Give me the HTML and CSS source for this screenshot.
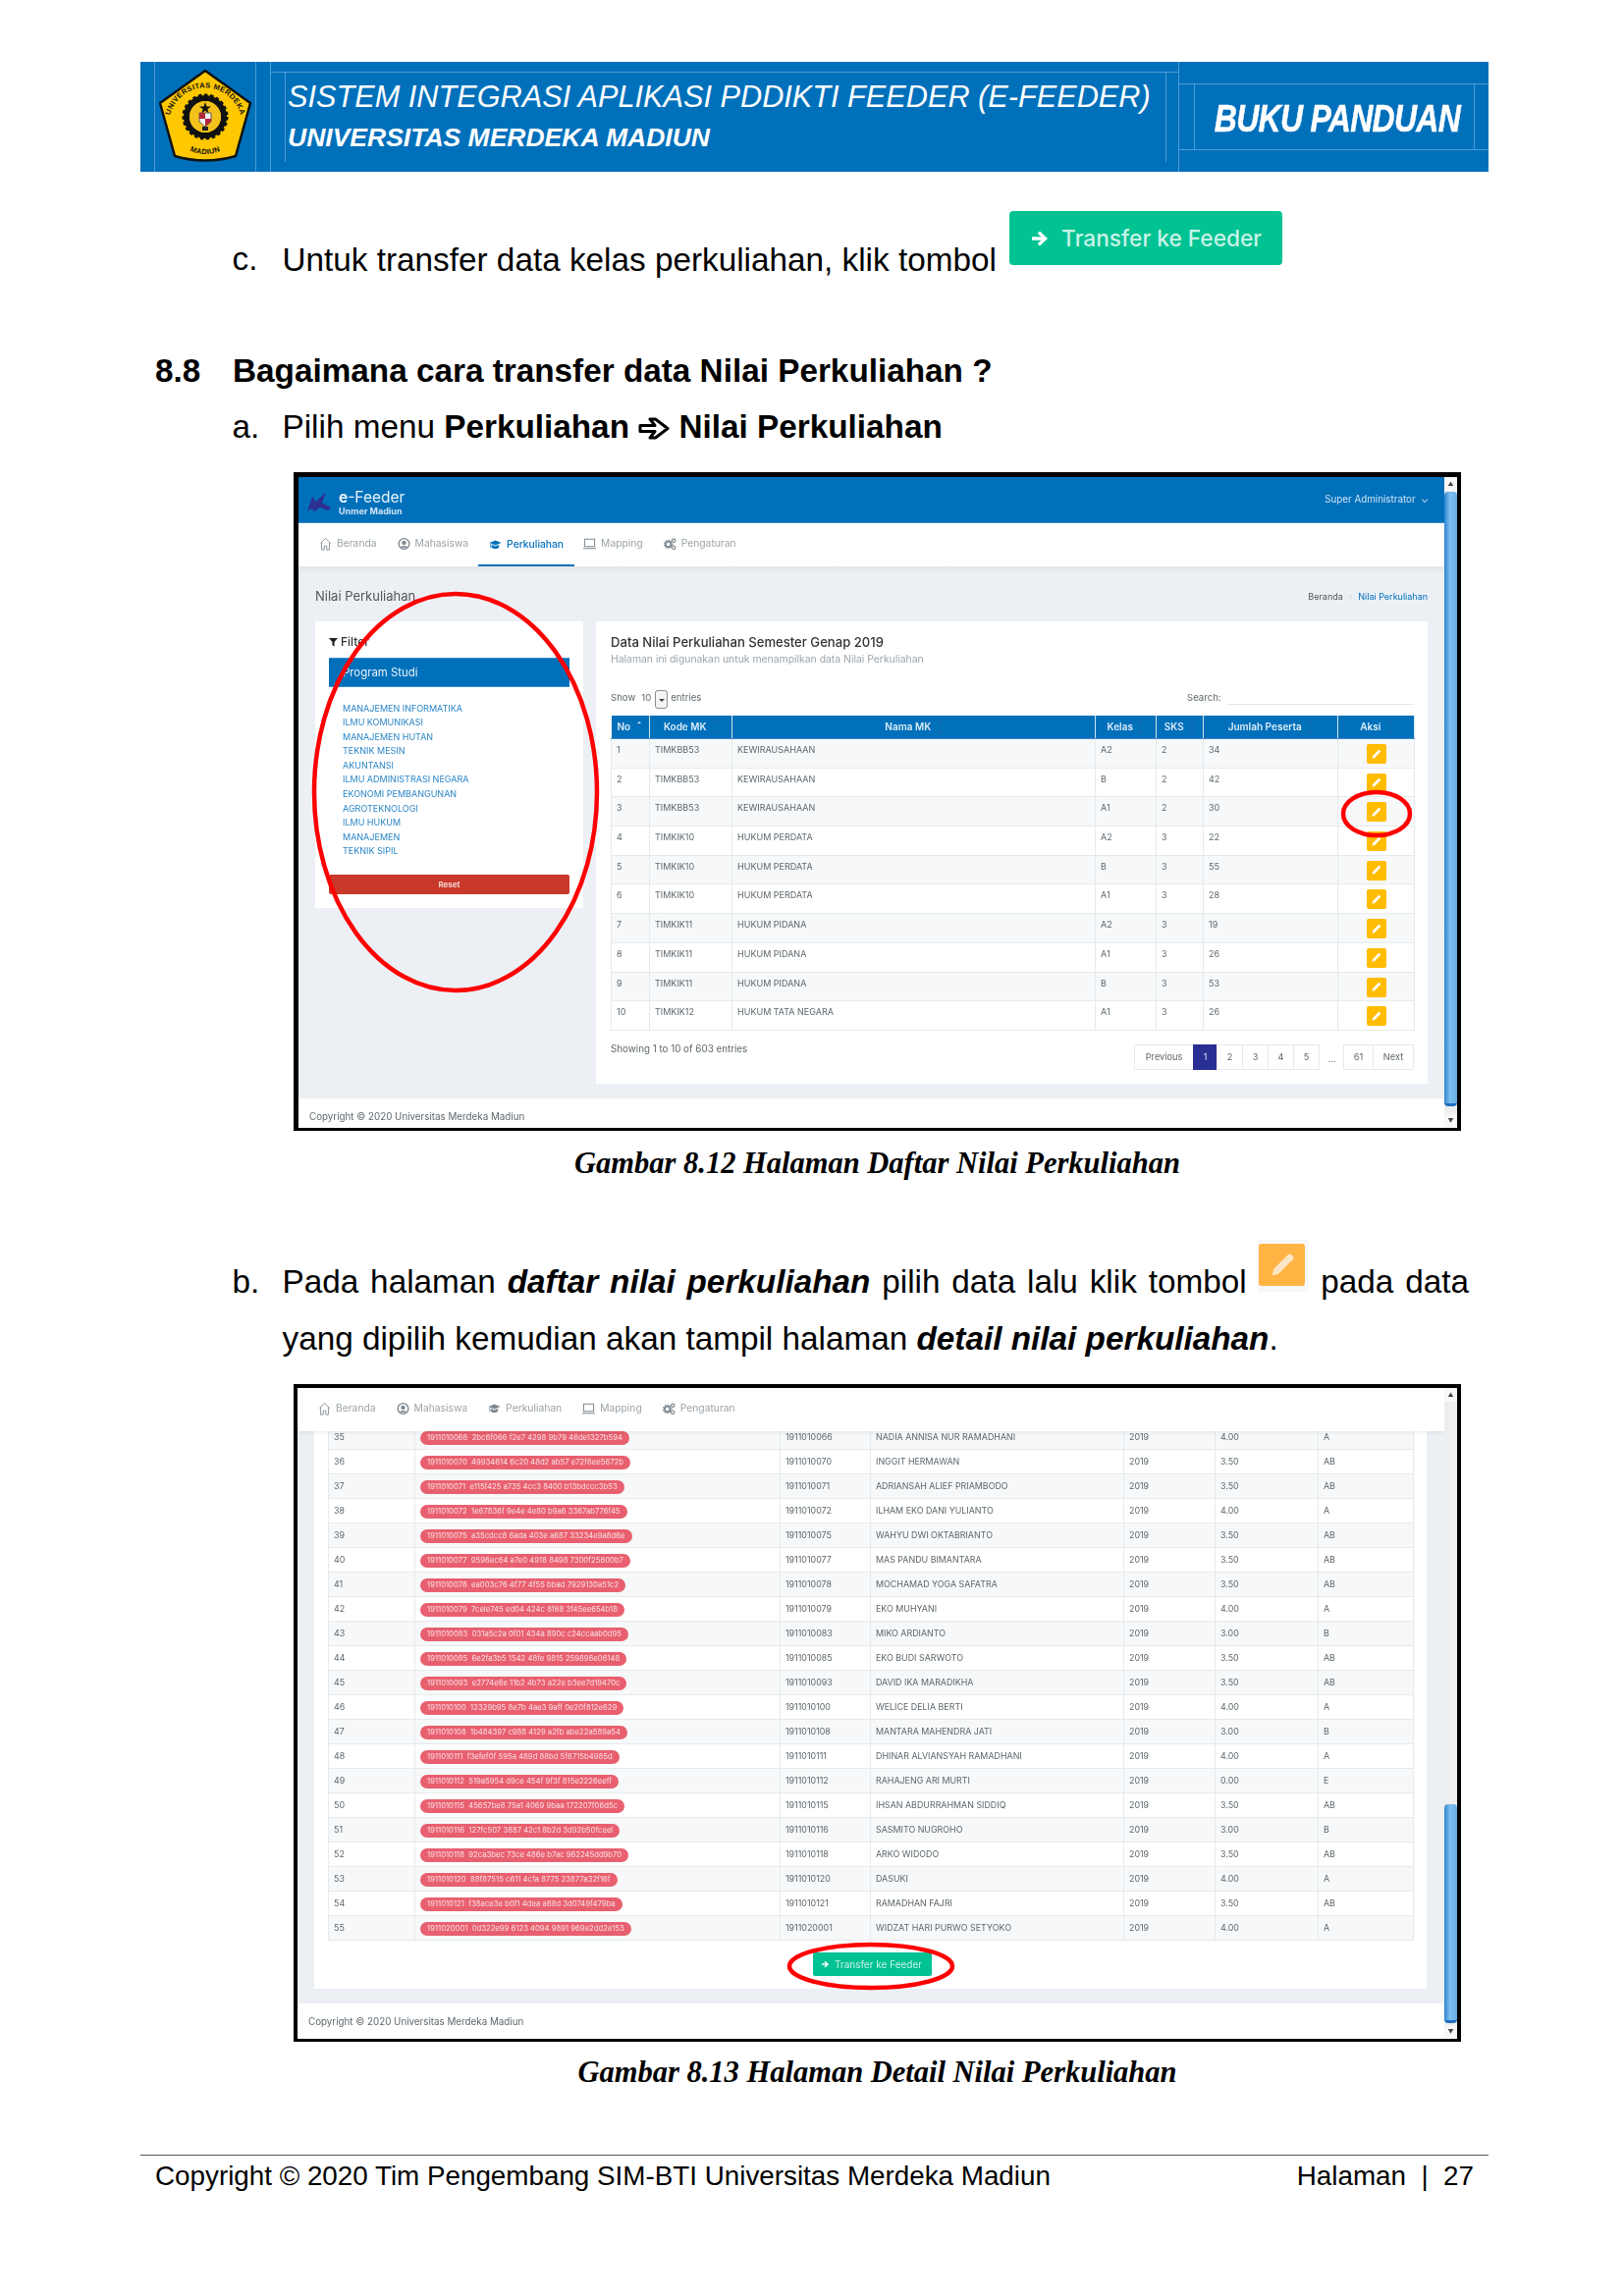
FILE: index.html
```html
<!DOCTYPE html>
<html lang="id">
<head>
<meta charset="utf-8">
<title>Buku Panduan</title>
<link rel="stylesheet" href="styles.css">
</head>
<body>
<svg class="defs" width="0" height="0" aria-hidden="true">
  <symbol id="i-pencil" viewBox="0 0 20 20"><path d="M4.500 15.500l1-3.600L13 4.400c.6-.6 1.400-.6 2 0l.6.6c.6.6.6 1.400 0 2L8.100 14.500z" fill="currentColor"/></symbol>
  <symbol id="i-arrow" viewBox="0 0 20 20"><path d="M10 2.500l8 7.500-8 7.500-2.300-2.300 3.700-3.500H2V8.300h9.400L7.700 4.800z" fill="currentColor"/></symbol>
  <symbol id="i-home" viewBox="0 0 14 16"><path d="M1 7.500L7 1.500l6 6M2.500 6.500V15h3v-4.500h3V15h3V6.500" fill="none" stroke="currentColor" stroke-width="1"/></symbol>
  <symbol id="i-user" viewBox="0 0 14 14"><circle cx="7" cy="7" r="5.800" fill="none" stroke="currentColor" stroke-width="1.500"/><circle cx="7" cy="5.800" r="2.400" fill="currentColor"/><path d="M3 11c1-2.300 7-2.300 8 0" fill="currentColor"/></symbol>
  <symbol id="i-cap" viewBox="0 0 16 14"><path d="M8 1.500L15.500 4.500 8 7.500 .5 4.500zM3.500 7v3.500c2 2 7 2 9 0V7L8 8.800zM1.800 5.500v5.500h1V6z" fill="currentColor"/></symbol>
  <symbol id="i-monitor" viewBox="0 0 14 14"><path d="M1.500 2h11v8h-11zM0 12h14" fill="none" stroke="currentColor" stroke-width="1.100"/></symbol>
  <symbol id="i-gears" viewBox="0 0 14 14"><circle cx="5" cy="7.500" r="3" fill="none" stroke="currentColor" stroke-width="2"/><circle cx="5" cy="7.500" r="4.600" fill="none" stroke="currentColor" stroke-width="1.200" stroke-dasharray="1.500 1.500"/><circle cx="11" cy="3.500" r="1.800" fill="none" stroke="currentColor" stroke-width="1.200"/><circle cx="11" cy="11" r="1.800" fill="none" stroke="currentColor" stroke-width="1.200"/></symbol>
</svg>

<main class="page">
  <header class="hdr">
    <svg class="hdr-lines" viewBox="0 0 1373 112" aria-hidden="true">
      <path d="M14.500 0V112M117.500 0V112M132.500 0V112M132 10.500H1057M147.500 10.500V102M1044.500 10.500V102M1057.500 0V112M1057 22.500H1373M1057 89.500H1373M1073.500 22.500V89.500M1358.500 22.500V89.500"/>
    </svg>
    <div class="hdr-logo">
      <svg class="crest" viewBox="0 0 94 94">
        <defs>
          <path id="arcTop" d="M11 64A37 37 0 1 1 83 64"/>
          <path id="arcBot" d="M20 74A36 36 0 0 0 74 74"/>
        </defs>
        <path d="M47 1L93 34 78 88Q47 97 16 88L1 34z" fill="#ffc800" stroke="#111" stroke-width="2.500" stroke-linejoin="round"/>
        <text class="crest-t"><textPath href="#arcTop" startOffset="50%" text-anchor="middle">UNIVERSITAS MERDEKA</textPath></text>
        <text class="crest-t"><textPath href="#arcBot" startOffset="50%" text-anchor="middle">MADIUN</textPath></text>
        <circle cx="47" cy="48" r="19" fill="none" stroke="#111" stroke-width="6"/>
        <circle cx="47" cy="48" r="22" fill="none" stroke="#111" stroke-width="3" stroke-dasharray="3.500 2.500"/>
        <circle cx="47" cy="48" r="16" fill="#f2c21a"/>
        <path d="M47 33l1.500 4.500h4.500l-3.700 2.700 1.400 4.300-3.700-2.700-3.700 2.700 1.400-4.300-3.700-2.700h4.500z" fill="#111"/>
        <path d="M41 44h12v9l-6 5-6-5z" fill="#eee" stroke="#444" stroke-width=".8"/>
        <path d="M41 44h6v6h-6zM47 50h6v3l-6 5z" fill="#b3263a"/>
        <path d="M44 58h6v4h-6z" fill="#222"/>
      </svg>
    </div>
    <div class="hdr-title">
      <div class="hdr-main">SISTEM INTEGRASI APLIKASI PDDIKTI FEEDER (E-FEEDER)</div>
      <div class="hdr-sub">UNIVERSITAS MERDEKA MADIUN</div>
    </div>
    <div class="hdr-badge"><span class="hdr-badge-t">BUKU PANDUAN</span></div>
  </header>

  <div class="item item-c">
    <span class="mark">c.</span>
    <p class="txt">Untuk transfer data kelas perkuliahan, klik tombol <span class="big-btn"><svg class="big-arrow"><use href="#i-arrow"/></svg>Transfer ke Feeder</span></p>
  </div>

  <h2 class="sec"><span class="sec-no">8.8</span><span>Bagaimana cara transfer data Nilai Perkuliahan ?</span></h2>

  <div class="item item-a">
    <span class="mark">a.</span>
    <p class="txt">Pilih menu <b>Perkuliahan <svg class="wing" viewBox="0 0 32 23" role="img" aria-label="panah"><path d="M2 8.500H17L12 2H17.500L30 11.500 17.500 21H12L17 14.500H2z"/></svg> Nilai Perkuliahan</b></p>
  </div>

  <figure class="shot shot-a">
    <div class="view">
      <div class="main">
        <div class="topbar">
          <div class="brand">
            <svg class="brand-logo" viewBox="0 0 26 22"><path d="M1 21L6 6l4 5L20 1l-4 11 9 5-3 3-8-3-6 4-3-3z" fill="#2e2f92"/></svg>
            <div><div class="brand-n"><b>e</b>-Feeder</div><div class="brand-s">Unmer Madiun</div></div>
          </div>
          <div class="admin">Super Administrator <span class="chev">⌄</span></div>
        </div>
        <nav class="nav">
          <span class="nav-i"><svg class="ni"><use href="#i-home"/></svg>Beranda</span>
          <span class="nav-i"><svg class="ni"><use href="#i-user"/></svg>Mahasiswa</span>
          <span class="nav-i nav-on"><svg class="ni"><use href="#i-cap"/></svg>Perkuliahan</span>
          <span class="nav-i"><svg class="ni"><use href="#i-monitor"/></svg>Mapping</span>
          <span class="nav-i"><svg class="ni"><use href="#i-gears"/></svg>Pengaturan</span>
        </nav>
        <div class="content content-a">
          <div class="crumbs">
            <span class="pg-title">Nilai Perkuliahan</span>
            <span class="bc"><span>Beranda</span><span class="bc-sep">›</span><span class="bc-on">Nilai Perkuliahan</span></span>
          </div>
          <div class="cards">
            <aside class="card filter">
              <div class="f-title"><svg class="funnel" viewBox="0 0 10 10"><path d="M0 .5h10L6.200 5v5L3.800 8.500V5z" fill="#222"/></svg>Filter</div>
              <div class="f-head">Program Studi</div>
              <ul class="f-list">
                <li>MANAJEMEN INFORMATIKA</li><li>ILMU KOMUNIKASI</li><li>MANAJEMEN HUTAN</li><li>TEKNIK MESIN</li><li>AKUNTANSI</li><li>ILMU ADMINISTRASI NEGARA</li><li>EKONOMI PEMBANGUNAN</li><li>AGROTEKNOLOGI</li><li>ILMU HUKUM</li><li>MANAJEMEN</li><li>TEKNIK SIPIL</li>
              </ul>
              <div class="reset">Reset</div>
            </aside>
            <section class="card data">
              <div class="d-title">Data Nilai Perkuliahan Semester Genap 2019</div>
              <div class="d-sub">Halaman ini digunakan untuk menampilkan data Nilai Perkuliahan</div>
              <div class="ctrl">
                <span class="show">Show <span class="show-n">10</span><span class="sel"></span> entries</span>
                <span class="search">Search:<span class="search-in"></span></span>
              </div>
              <table class="tb tb-a">
                <colgroup><col class="a1"><col class="a2"><col class="a3"><col class="a4"><col class="a5"><col class="a6"><col class="a7"></colgroup>
                <thead><tr><th class="th-l">No <i class="s s-up"></i></th><th>Kode MK <i class="s"></i></th><th>Nama MK <i class="s"></i></th><th>Kelas <i class="s"></i></th><th>SKS <i class="s"></i></th><th>Jumlah Peserta <i class="s"></i></th><th>Aksi <i class="s"></i></th></tr></thead>
                <tbody>
                  <tr><td>1</td><td>TIMKBB53</td><td>KEWIRAUSAHAAN</td><td>A2</td><td>2</td><td>34</td><td class="act"><span class="edit"><svg class="pen"><use href="#i-pencil"/></svg></span></td></tr>
                  <tr><td>2</td><td>TIMKBB53</td><td>KEWIRAUSAHAAN</td><td>B</td><td>2</td><td>42</td><td class="act"><span class="edit"><svg class="pen"><use href="#i-pencil"/></svg></span></td></tr>
                  <tr><td>3</td><td>TIMKBB53</td><td>KEWIRAUSAHAAN</td><td>A1</td><td>2</td><td>30</td><td class="act"><span class="edit"><svg class="pen"><use href="#i-pencil"/></svg></span></td></tr>
                  <tr><td>4</td><td>TIMKIK10</td><td>HUKUM PERDATA</td><td>A2</td><td>3</td><td>22</td><td class="act"><span class="edit"><svg class="pen"><use href="#i-pencil"/></svg></span></td></tr>
                  <tr><td>5</td><td>TIMKIK10</td><td>HUKUM PERDATA</td><td>B</td><td>3</td><td>55</td><td class="act"><span class="edit"><svg class="pen"><use href="#i-pencil"/></svg></span></td></tr>
                  <tr><td>6</td><td>TIMKIK10</td><td>HUKUM PERDATA</td><td>A1</td><td>3</td><td>28</td><td class="act"><span class="edit"><svg class="pen"><use href="#i-pencil"/></svg></span></td></tr>
                  <tr><td>7</td><td>TIMKIK11</td><td>HUKUM PIDANA</td><td>A2</td><td>3</td><td>19</td><td class="act"><span class="edit"><svg class="pen"><use href="#i-pencil"/></svg></span></td></tr>
                  <tr><td>8</td><td>TIMKIK11</td><td>HUKUM PIDANA</td><td>A1</td><td>3</td><td>26</td><td class="act"><span class="edit"><svg class="pen"><use href="#i-pencil"/></svg></span></td></tr>
                  <tr><td>9</td><td>TIMKIK11</td><td>HUKUM PIDANA</td><td>B</td><td>3</td><td>53</td><td class="act"><span class="edit"><svg class="pen"><use href="#i-pencil"/></svg></span></td></tr>
                  <tr><td>10</td><td>TIMKIK12</td><td>HUKUM TATA NEGARA</td><td>A1</td><td>3</td><td>26</td><td class="act"><span class="edit"><svg class="pen"><use href="#i-pencil"/></svg></span></td></tr>
                </tbody>
              </table>
              <div class="tfoot">
                <span class="count">Showing 1 to 10 of 603 entries</span>
                <div class="pager">
                  <span class="p p-prev">Previous</span><span class="p p-cur">1</span><span class="p p-n">2</span><span class="p p-n">3</span><span class="p p-n">4</span><span class="p p-n">5</span><span class="p-gap">…</span><span class="p p-last">61</span><span class="p p-next">Next</span>
                </div>
              </div>
            </section>
          </div>
        </div>
        <footer class="copy copy-a">Copyright © 2020 Universitas Merdeka Madiun</footer>
      </div>
      <div class="sbar sbar-a"><span class="sb-up">▲</span><span class="sb-track"><span class="sb-thumb"></span></span><span class="sb-dn">▼</span></div>
    </div>
    <svg class="marks" viewBox="0 0 1189 671" aria-hidden="true">
      <ellipse cx="165" cy="326" rx="144" ry="202"/>
      <ellipse cx="1103" cy="348" rx="34" ry="22"/>
    </svg>
  </figure>

  <figcaption class="cap">Gambar 8.12 Halaman Daftar Nilai Perkuliahan</figcaption>

  <div class="item item-b">
    <span class="mark">b.</span>
    <div class="txt txt-j">
      <p class="line-j">Pada halaman <b><i>daftar nilai perkuliahan</i></b> pilih data lalu klik tombol <span class="ic-box"><span class="ic-in"><svg class="ic-pen"><use href="#i-pencil"/></svg></span></span> pada data</p>
      <p class="line">yang dipilih kemudian akan tampil halaman <b><i>detail nilai perkuliahan</i></b>.</p>
    </div>
  </div>

  <figure class="shot shot-b">
    <div class="view">
      <div class="main">
        <nav class="nav nav-b">
          <span class="nav-i"><svg class="ni"><use href="#i-home"/></svg>Beranda</span>
          <span class="nav-i"><svg class="ni"><use href="#i-user"/></svg>Mahasiswa</span>
          <span class="nav-i"><svg class="ni"><use href="#i-cap"/></svg>Perkuliahan</span>
          <span class="nav-i"><svg class="ni"><use href="#i-monitor"/></svg>Mapping</span>
          <span class="nav-i"><svg class="ni"><use href="#i-gears"/></svg>Pengaturan</span>
        </nav>
        <div class="content content-b">
          <section class="card detail">
            <table class="tb tb-b">
              <colgroup><col class="b1"><col class="b2"><col class="b3"><col class="b4"><col class="b5"><col class="b6"><col class="b7"></colgroup>
              <tbody>
                <tr><td>35</td><td><span class="pill">1911010066&nbsp; 2bc6f066 f2e7 4298 9b79 46de1327b594</span></td><td>1911010066</td><td>NADIA ANNISA NUR RAMADHANI</td><td>2019</td><td>4.00</td><td>A</td></tr>
                <tr><td>36</td><td><span class="pill">1911010070&nbsp; 49934614 6c20 48d2 ab57 e72f6ee5672b</span></td><td>1911010070</td><td>INGGIT HERMAWAN</td><td>2019</td><td>3.50</td><td>AB</td></tr>
                <tr><td>37</td><td><span class="pill">1911010071&nbsp; e115f425 a735 4cc3 8400 b13bdccc3b53</span></td><td>1911010071</td><td>ADRIANSAH ALIEF PRIAMBODO</td><td>2019</td><td>3.50</td><td>AB</td></tr>
                <tr><td>38</td><td><span class="pill">1911010072&nbsp; 1e67836f 9e4e 4e80 b9a6 3367ab776f45</span></td><td>1911010072</td><td>ILHAM EKO DANI YULIANTO</td><td>2019</td><td>4.00</td><td>A</td></tr>
                <tr><td>39</td><td><span class="pill">1911010075&nbsp; a35cdcc8 6ada 403e a687 33234e9a8d6e</span></td><td>1911010075</td><td>WAHYU DWI OKTABRIANTO</td><td>2019</td><td>3.50</td><td>AB</td></tr>
                <tr><td>40</td><td><span class="pill">1911010077&nbsp; 9596ec64 a7e0 4918 8498 7300f25600b7</span></td><td>1911010077</td><td>MAS PANDU BIMANTARA</td><td>2019</td><td>3.50</td><td>AB</td></tr>
                <tr><td>41</td><td><span class="pill">1911010078&nbsp; ea003c76 4f77 4f55 bbad 7929130a51c2</span></td><td>1911010078</td><td>MOCHAMAD YOGA SAFATRA</td><td>2019</td><td>3.50</td><td>AB</td></tr>
                <tr><td>42</td><td><span class="pill">1911010079&nbsp; 7cele745 ed04 424c 8f68 3f45ee654b18</span></td><td>1911010079</td><td>EKO MUHYANI</td><td>2019</td><td>4.00</td><td>A</td></tr>
                <tr><td>43</td><td><span class="pill">1911010083&nbsp; 031a5c2a 0f01 434a 890c c24ccaab0d95</span></td><td>1911010083</td><td>MIKO ARDIANTO</td><td>2019</td><td>3.00</td><td>B</td></tr>
                <tr><td>44</td><td><span class="pill">1911010085&nbsp; 6e2fa3b5 1542 48fe 9815 259896e06148</span></td><td>1911010085</td><td>EKO BUDI SARWOTO</td><td>2019</td><td>3.50</td><td>AB</td></tr>
                <tr><td>45</td><td><span class="pill">1911010093&nbsp; e2774e6e 11b2 4b73 a22e b3ee7d19470c</span></td><td>1911010093</td><td>DAVID IKA MARADIKHA</td><td>2019</td><td>3.50</td><td>AB</td></tr>
                <tr><td>46</td><td><span class="pill">1911010100&nbsp; 12329b95 8e7b 4ae3 9aff 0e20f812e629</span></td><td>1911010100</td><td>WELICE DELIA BERTI</td><td>2019</td><td>4.00</td><td>A</td></tr>
                <tr><td>47</td><td><span class="pill">1911010108&nbsp; 1b484397 c988 4129 a2fb abe22a589a54</span></td><td>1911010108</td><td>MANTARA MAHENDRA JATI</td><td>2019</td><td>3.00</td><td>B</td></tr>
                <tr><td>48</td><td><span class="pill">1911010111&nbsp; f3efef0f 595a 489d 88bd 5f6715b4985d</span></td><td>1911010111</td><td>DHINAR ALVIANSYAH RAMADHANI</td><td>2019</td><td>4.00</td><td>A</td></tr>
                <tr><td>49</td><td><span class="pill">1911010112&nbsp; 519a5954 d9ce 454f 9f3f 815e2226eeff</span></td><td>1911010112</td><td>RAHAJENG ARI MURTI</td><td>2019</td><td>0.00</td><td>E</td></tr>
                <tr><td>50</td><td><span class="pill">1911010115&nbsp; 45657be8 75a1 4069 9baa 172207f06d5c</span></td><td>1911010115</td><td>IHSAN ABDURRAHMAN SIDDIQ</td><td>2019</td><td>3.50</td><td>AB</td></tr>
                <tr><td>51</td><td><span class="pill">1911010116&nbsp; 127fc507 3887 42c1 8b2d 3d92b50fceel</span></td><td>1911010116</td><td>SASMITO NUGROHO</td><td>2019</td><td>3.00</td><td>B</td></tr>
                <tr><td>52</td><td><span class="pill">1911010118&nbsp; 92ca3bec 73ce 486e b7ac 962245dd9b70</span></td><td>1911010118</td><td>ARKO WIDODO</td><td>2019</td><td>3.50</td><td>AB</td></tr>
                <tr><td>53</td><td><span class="pill">1911010120&nbsp; 88f87515 c611 4c1a 8775 23877a32f16f</span></td><td>1911010120</td><td>DASUKI</td><td>2019</td><td>4.00</td><td>A</td></tr>
                <tr><td>54</td><td><span class="pill">1911010121&nbsp; f38ace3e b0f1 4dea a68d 3d0749f479ba</span></td><td>1911010121</td><td>RAMADHAN FAJRI</td><td>2019</td><td>3.50</td><td>AB</td></tr>
                <tr><td>55</td><td><span class="pill">1911020001&nbsp; 0d322e99 6123 4094 9891 969e2dd2e153</span></td><td>1911020001</td><td>WIDZAT HARI PURWO SETYOKO</td><td>2019</td><td>4.00</td><td>A</td></tr>
              </tbody>
            </table>
            <div class="tr-wrap"><span class="sm-btn"><svg class="sm-arrow"><use href="#i-arrow"/></svg>Transfer ke Feeder</span></div>
          </section>
        </div>
        <footer class="copy copy-b">Copyright © 2020 Universitas Merdeka Madiun</footer>
      </div>
      <div class="sbar sbar-b"><span class="sb-up">▲</span><span class="sb-track"><span class="sb-thumb"></span></span><span class="sb-dn">▼</span></div>
    </div>
    <svg class="marks marks-b" viewBox="0 0 1189 670" aria-hidden="true">
      <ellipse cx="588" cy="593" rx="83" ry="22"/>
    </svg>
  </figure>

  <figcaption class="cap cap-b">Gambar 8.13 Halaman Detail Nilai Perkuliahan</figcaption>

  <footer class="pg-foot">
    <span>Copyright © 2020 Tim Pengembang SIM-BTI Universitas Merdeka Madiun</span>
    <span>Halaman &nbsp;|&nbsp; 27</span>
  </footer>
</main>
</body>
</html>
```
FILE: styles.css
```css
* { box-sizing: border-box; }
html, body { margin: 0; padding: 0; background: #fff; }
body { font-family: "Liberation Sans", Arial, sans-serif; color: #000; }
.defs { position: absolute; }
.page { width: 1654px; height: 2339px; padding: 63px 138px 0 143px; overflow: hidden; }

/* header */
.hdr { position: relative; height: 112px; background: #0070bb; color: #fff; display: flex; }
.hdr-lines { position: absolute; inset: 0; width: 100%; height: 100%; }
.hdr-lines path { fill: none; stroke: #4c9bd3; stroke-width: 1; }
.hdr-logo { width: 150px; padding: 8px 0 0 19px; }
.crest { display: block; width: 94px; height: 94px; }
.crest-t { font: bold 7.600px "Liberation Sans", sans-serif; fill: #111; letter-spacing: .35px; }
.hdr-title { width: 907px; font-style: italic; white-space: nowrap; }
.hdr-main { font-size: 30.700px; line-height: 38px; margin-top: 17px; }
.hdr-sub { font-size: 26.500px; line-height: 30px; font-weight: bold; margin-top: 7px; }
.hdr-badge { flex: 1; display: flex; justify-content: center; font-weight: bold; font-style: italic; font-size: 38px; line-height: 38px; margin-top: 39px; white-space: nowrap; padding-left: 8px; }
.hdr-badge-t { display: block; transform: scaleX(.84); letter-spacing: -.8px; -webkit-text-stroke: .5px #fff; }

/* body text */
.item { display: flex; font-size: 33.300px; line-height: 58px; }
.mark { width: 51px; margin-left: 93.500px; flex: none; }
.txt { margin: 0; flex: 1; white-space: nowrap; }
.item-c { margin-top: 60px; }
.big-btn { display: inline-flex; align-items: center; width: 278px; height: 55px; margin: -20px 0 -20px 4px; padding-left: 21px; vertical-align: 21px; background: #00c292; color: #c9f3e8; border-radius: 4px; font-family: Inter, "Liberation Sans", sans-serif; font-size: 22.700px; font-weight: 500; gap: 12px; }
.big-arrow { width: 20px; height: 24px; color: #fff; }
.sec { display: flex; margin: 55px 0 0; font-size: 33.300px; line-height: 58px; font-weight: bold; padding-left: 15px; }
.sec-no { width: 79px; }
.item-a { margin-top: -1px; }
.wing { display: inline-block; width: 32px; height: 23px; vertical-align: -2px; }
.wing path { fill: none; stroke: #000; stroke-width: 3; stroke-linejoin: round; }
.shot { position: relative; margin: 17px 0 0 156px; width: 1189px; background: #000; border-style: solid; border-color: #000; }
.shot-a { height: 671px; border-width: 5px 4px 3px 5px; }
.shot-b { height: 670px; border-width: 4px 4px 3px 4px; }
.marks { position: absolute; left: -5px; top: -5px; width: 1189px; height: 671px; }
.marks-b { left: -4px; top: -4px; height: 670px; }
.marks ellipse { fill: none; stroke: #f00; stroke-width: 4.500; }
.cap { font-family: "Liberation Serif", "Times New Roman", serif; font-weight: bold; font-style: italic; font-size: 30.500px; line-height: 40px; text-align: center; margin: 13px 0 0 156px; width: 1189px; }
.cap-b { margin-top: 11px; }
.item-b { margin-top: 72px; }
.txt-j { padding-right: 20px; white-space: normal; }
.line-j, .line { margin: 0; height: 58px; }
.line-j { text-align: justify; text-align-last: justify; }
.ic-box { display: inline-block; width: 52px; height: 53px; margin: -30px 0; padding: 4px 4px 6px 1px; background: #f7f7f9; vertical-align: 9px; }
.ic-in { display: flex; height: 43px; align-items: center; justify-content: center; background: #ffb444; border-radius: 3px; }
.ic-pen { width: 38px; height: 38px; color: #fde6c5; }

/* embedded screenshot */
.view { display: flex; height: 100%; background: #fff; font-family: Inter, "Open Sans", sans-serif; color: #5d676d; filter: blur(.35px); }
.main { flex: 1; min-width: 0; display: flex; flex-direction: column; overflow: hidden; }
.topbar { height: 47px; background: #0070bb; display: flex; justify-content: space-between; border-bottom: 1px solid #3a8ecb; flex: none; }
.brand { display: flex; padding: 14px 0 0 8px; gap: 7px; color: #e7f2fa; }
.brand-logo { width: 26px; height: 22px; }
.brand-n { font-size: 15.500px; line-height: 16px; margin-top: -1px; }
.brand-s { font-size: 9px; line-height: 11px; font-weight: 700; color: #cfe4f3; }
.admin { font-size: 9.800px; line-height: 12px; margin: 17px 16px 0 0; color: #cfe4f3; }
.chev { margin-left: 3px; }
.nav { height: 44px; flex: none; background: #fff; display: flex; padding-left: 21px; position: relative; z-index: 1; font-size: 10.300px; color: #9aa4aa; }
.nav-b { box-shadow: 0 2px 4px rgba(0,0,0,.06); }
.nav-i { display: flex; align-items: center; gap: 5px; margin-right: 21px; height: 41px; }
.ni { width: 13px; height: 14px; color: #7d8890; margin-top: 2px; }
.nav-on { color: #0070bb; font-weight: 500; height: 42px; box-shadow: 0 2px 0 #0070bb; padding: 0 11px; margin: 0 9px 0 -11px; }
.nav-on .ni { color: #0070bb; }
.content { flex: 1; background: #ecf0f5; padding: 0 17px; min-height: 0; }
.content-a { background: linear-gradient(#e3e7eb, #ecf0f5 8px); }
.crumbs { height: 56px; padding-top: 5px; display: flex; align-items: center; justify-content: space-between; }
.pg-title { font-size: 13px; color: #555; }
.bc { font-size: 9px; display: flex; gap: 6px; color: #555; }
.bc-sep { color: #cfd4d8; }
.bc-on { color: #0070bb; }
.cards { display: flex; gap: 13px; align-items: flex-start; }
.card { background: #fff; }
.filter { width: 273px; height: 292px; padding: 13px 14px 0; }
.f-title { font-size: 12px; line-height: 16px; font-weight: 500; color: #333; display: flex; align-items: center; gap: 3px; }
.funnel { width: 9px; height: 10px; }
.f-head { height: 30px; margin-top: 8px; background: #0070bb; border-top: 1px solid #3a8ecb; border-bottom: 1px solid #3a8ecb; color: #e7f2fa; font-size: 11.400px; line-height: 28px; padding-left: 14px; }
.f-list { list-style: none; margin: 15px 0 0; padding: 0 0 0 14px; font-size: 9px; line-height: 14.600px; color: #2a86c6; }
.reset { height: 20px; margin-top: 16px; background: #c8392b; border-radius: 2px; color: #f4d2cd; text-align: center; font-size: 8px; font-weight: 700; line-height: 20px; }
.data { width: 847px; height: 471px; padding: 13px 14px 0 15px; }
.d-title { font-size: 13.100px; line-height: 16px; font-weight: 500; color: #333; }
.d-sub { font-size: 10.400px; line-height: 14px; margin-top: 3px; color: #9aa4aa; }
.ctrl { display: flex; justify-content: space-between; height: 19px; margin-top: 24px; font-size: 9.600px; line-height: 16px; }
.show { display: flex; }
.show-n { margin: 0 4px 0 6px; }
.show-n + .sel { margin-right: 3px; }
.sel { position: relative; width: 13px; height: 19px; border: 1px solid #8d8d8d; border-radius: 3px; background: #f4f4f4; }
.sel::after { content: ""; position: absolute; left: 3px; top: 8px; border: 3px solid transparent; border-top-color: #444; border-bottom: 0; }
.search { display: flex; width: 231px; }
.search-in { flex: 1; margin-left: 6px; height: 15px; border-bottom: 1px solid #e3e6e8; }
.tb { border-collapse: collapse; table-layout: fixed; font-size: 9px; color: #5d676d; }
.tb td { border: 1px solid #e7eaec; white-space: nowrap; overflow: hidden; vertical-align: top; padding: 0 0 0 5px; }
.tb-a { width: 818px; margin-top: 7px; }
.tb-a th { height: 24px; background: #0070bb; color: #dcecf7; font-size: 10px; font-weight: 600; padding: 0; border-right: 1px solid #cfe3f1; border-bottom: 1px solid #3a8ecb; white-space: nowrap; }
.tb-a .th-l { text-align: left; padding-left: 6px; }
.tb-a td { height: 29.700px; line-height: 21px; }
.tb-a tbody tr:nth-child(odd) td, .tb-b tbody tr:nth-child(odd) td { background: #f6f8f9; }
.a1 { width: 39px; } .a2 { width: 84px; } .a3 { width: 370px; } .a4 { width: 62px; } .a5 { width: 48px; } .a6 { width: 137px; } .a7 { width: 78px; }
.s { display: inline-block; position: relative; width: 5px; height: 9px; margin-left: 4px; vertical-align: -1px; }
.s::before, .s::after { content: ""; position: absolute; left: 0; border: 2.500px solid transparent; }
.s::before { top: -1px; border-bottom-color: #2b5f93; border-top: 0; }
.s::after { bottom: -1px; border-top-color: #2b5f93; border-bottom: 0; }
.s-up::before { border-bottom-color: #dcecf7; }
.s-up::after { display: none; }
.tb-a .act { text-align: center; padding: 0; }
.edit { display: inline-flex; align-items: center; justify-content: center; width: 20px; height: 20px; margin-top: 5px; background: #ffbc00; border-radius: 2px; vertical-align: top; }
.pen { width: 15px; height: 15px; color: #fff; }
.tfoot { display: flex; justify-content: space-between; margin-top: 12px; }
.count { font-size: 9.800px; line-height: 14px; }
.pager { display: flex; margin-top: 2px; height: 26px; font-size: 9.200px; }
.p { display: flex; align-items: center; justify-content: center; border: 1px solid #e7eaec; margin-left: -1px; background: #fff; }
.p-prev { width: 61px; }
.p-cur { width: 25px; background: #2a2f93; color: #dfe0f2; border-color: #2a2f93; }
.p-n { width: 27px; }
.p-gap { width: 25px; text-align: center; line-height: 30px; }
.p-last { width: 31px; }
.p-next { width: 42px; }
.copy { background: #fff; flex: none; font-size: 9.800px; padding-left: 11px; }
.copy-a { height: 30px; line-height: 38px; }
.copy-b { height: 36px; line-height: 38px; }

/* scrollbar */
.sbar { width: 13px; flex: none; background: #eceef0; display: flex; flex-direction: column; font-size: 6px; text-align: center; color: #444; }
.sb-up, .sb-dn { height: 14px; line-height: 14px; background: #f7f7f7; flex: none; }
.sb-track { flex: 1; display: flex; flex-direction: column; }
.sb-thumb { display: block; width: 13px; background: linear-gradient(90deg, #2f84cf, #7fc0f0 45%, #62ade8); border-radius: 4px; border-bottom: 3px solid #1e6fbe; }
.sbar-a .sb-thumb { height: 626px; margin-top: 1px; }
.sbar-b .sb-thumb { height: 223px; margin-top: 410px; }

/* detail table */
.content-b { padding: 0 17px; }
.detail { margin-top: -7px; padding: 0 0 14px 14px; width: 1133px; height: 575px; }
.tb-b { width: 1105px; font-size: 8.900px; }
.tb-b td { height: 25px; line-height: 24px; padding-left: 5px; }
.b1 { width: 88px; } .b2 { width: 372px; } .b3 { width: 92px; } .b4 { width: 258px; } .b5 { width: 93px; } .b6 { width: 105px; } .b7 { width: 97px; }
.pill { display: inline-block; height: 14px; line-height: 14px; margin-top: 6px; vertical-align: top; padding: 0 7px; border-radius: 7px; background: #e8606f; color: #fbdfe3; font-size: 7.700px; white-space: nowrap; }
.tr-wrap { display: flex; justify-content: center; width: 1105px; margin-top: 12px; padding-left: 4px; }
.sm-btn { display: flex; align-items: center; gap: 5px; width: 121px; height: 24px; padding-left: 8px; background: #00c292; border-radius: 2px; color: #cdf3e9; font-size: 10px; }
.sm-arrow { width: 9px; height: 10px; color: #fff; }

/* page footer */
.pg-foot { display: flex; justify-content: space-between; margin-top: 64px; padding: 3px 15px 0 15px; border-top: 1px solid #555; font-size: 27.800px; line-height: 36px; }
```
